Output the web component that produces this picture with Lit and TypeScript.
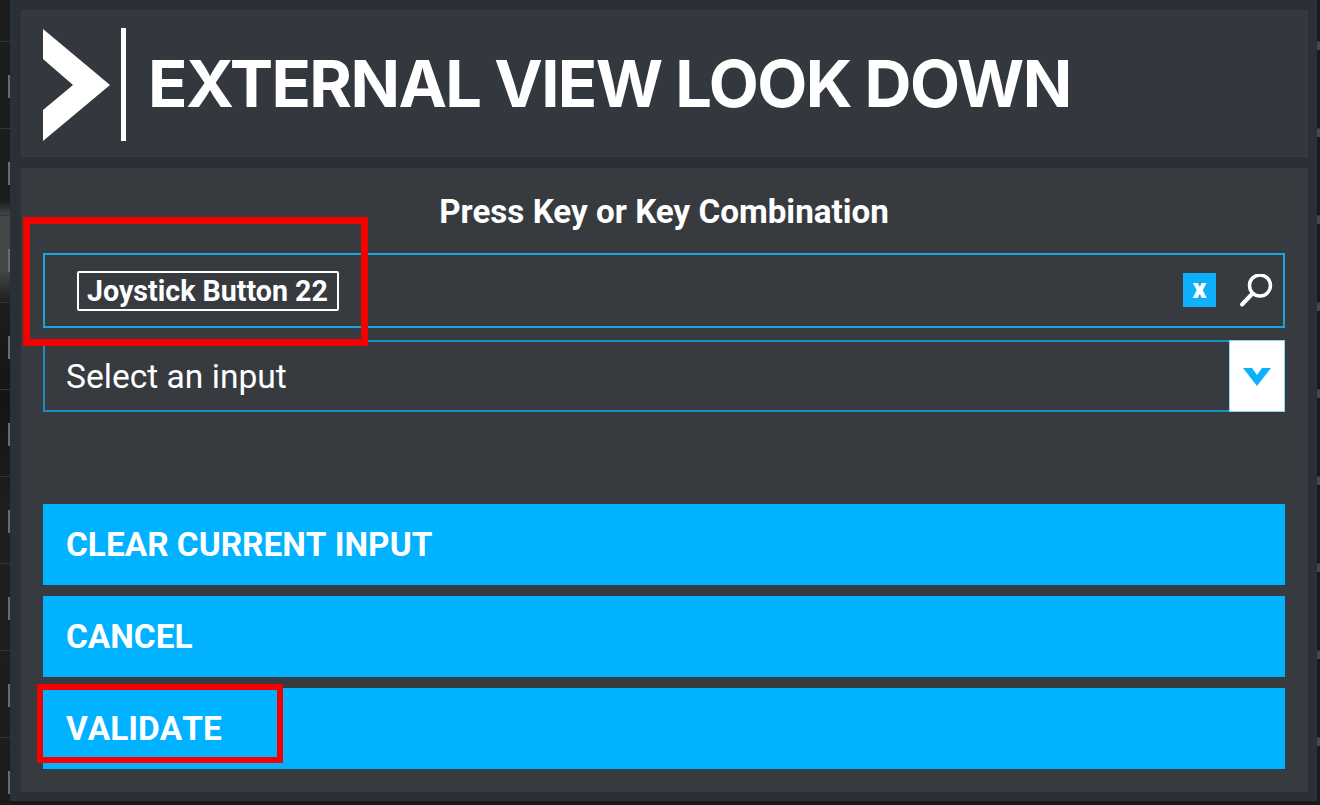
import { LitElement, html, css } from "lit";
import { customElement } from "lit/decorators.js";

// the window behind the dialog shows through on both sides as rows of 87px
const ROWS = [0, 1, 2, 3, 4, 5, 6, 7, 8];

@customElement("app-root")
export class AppRoot extends LitElement {
  static styles = css`
    :host {
      display: flex;
      position: relative;
      width: 1320px;
      height: 805px;
      overflow: hidden;
      background: #17191b;
      font-family: Roboto, "Liberation Sans", sans-serif;
      color: #fff;
    }
    .side {
      flex: none;
      display: flex;
      flex-direction: column;
      padding-top: 41px;
    }
    .side-left {
      width: 10px;
      background: linear-gradient(
        180deg,
        #1c1c1c 0,
        #1a1c1e 200px,
        #45474a 216px,
        #454746 270px,
        #1d1d1d 303px,
        #141414 400px,
        #1f1f1f 520px,
        #1b1b1b 100%
      );
    }
    .side-right {
      width: 3px;
      background: #171b20;
    }
    .row {
      box-sizing: border-box;
      height: 87px;
      flex: none;
      border-top: 1px solid #33353a;
      display: flex;
      justify-content: flex-end;
    }
    .side-left .tick {
      width: 2px;
      height: 23px;
      margin-top: 33px;
      background: #6a6c6e;
    }
    .side-right .tick {
      width: 3px;
      height: 8px;
      background: #44484c;
    }
    .frame {
      box-sizing: border-box;
      width: 1307px;
      height: 801px;
      flex: none;
      padding: 10px 9px 9px 11px;
      background: #2b3036;
      display: flex;
      flex-direction: column;
      gap: 11px;
    }
    .header {
      height: 147px;
      flex: none;
      background: #33383e;
      box-shadow: inset 0 0 0 1px #363b3f;
      display: flex;
      align-items: center;
      padding-left: 22px;
    }
    .logo {
      display: block;
      flex: none;
      margin: 1px 22px 0 0;
    }
    .title {
      font-family: Inter, Roboto, sans-serif;
      font-size: 65px;
      font-weight: 700;
      line-height: 1;
      letter-spacing: -1.6px;
      white-space: nowrap;
    }
    .body {
      flex: 1;
      background: #373b40;
      padding: 0 23px 0 22px;
      display: flex;
      flex-direction: column;
    }
    .prompt {
      height: 85px;
      flex: none;
      box-sizing: border-box;
      padding-top: 2px;
      display: flex;
      align-items: center;
      justify-content: center;
      font-size: 33.2px;
      font-weight: 700;
    }
    .field {
      box-sizing: border-box;
      height: 75px;
      flex: none;
      border: 2px solid #1ba4e0;
      display: flex;
      align-items: center;
      padding: 0 10px 0 32px;
    }
    .tag {
      box-sizing: border-box;
      height: 40px;
      padding: 0 9px 0 8px;
      border: 2px solid #fff;
      border-radius: 2px;
      font-size: 28.6px;
      font-weight: 700;
      line-height: 37px;
      white-space: nowrap;
    }
    .clear {
      width: 33px;
      height: 34px;
      margin: -2px 0 0 auto;
      background: #0fb0fb;
      font-size: 27px;
      font-weight: 900;
      line-height: 32px;
      text-align: center;
    }
    .search {
      display: block;
      margin-left: 23px;
    }
    .select {
      box-sizing: border-box;
      height: 72px;
      flex: none;
      margin-top: 12px;
      border: 2px solid #1a8dc2;
      border-right: none;
      display: flex;
      align-items: center;
      padding-left: 21px;
      font-size: 33.6px;
    }
    .arrow {
      box-sizing: border-box;
      width: 56px;
      height: 72px;
      margin-left: auto;
      border: 1px solid #8fd3f2;
      background: #fff;
      display: flex;
      align-items: center;
      justify-content: center;
      padding-top: 1px;
    }
    .actions {
      margin-top: 92px;
      display: flex;
      flex-direction: column;
      gap: 11px;
    }
    .action {
      height: 81px;
      background: #00b2ff;
      display: flex;
      align-items: center;
      padding-left: 23px;
      font-size: 33.4px;
      font-weight: 700;
      font-kerning: none;
    }
    .mark {
      position: absolute;
      box-sizing: border-box;
      border: 7px solid #f40000;
    }
    .mark-input {
      left: 23px;
      top: 217px;
      width: 345px;
      height: 129px;
    }
    .mark-validate {
      left: 37px;
      top: 684px;
      width: 246px;
      height: 79px;
      border-width: 6px;
    }
  `;

  private side(cls: string) {
    return html`
      <div class="side ${cls}">
        ${ROWS.map(() => html`<div class="row"><div class="tick"></div></div>`)}
      </div>
    `;
  }

  render() {
    return html`
      ${this.side("side-left")}
      <div class="frame">
        <div class="header">
          <svg class="logo" width="83" height="113" viewBox="0 0 83 113">
            <path d="M0 1 L67 57 L0 113 V82 L30 57 L0 31 Z" fill="#fff" />
            <rect x="78" y="0" width="5" height="113" fill="#fff" />
          </svg>
          <div class="title">EXTERNAL VIEW LOOK DOWN</div>
        </div>
        <div class="body">
          <div class="prompt">Press Key or Key Combination</div>
          <div class="field">
            <div class="tag">Joystick Button 22</div>
            <div class="clear">x</div>
            <svg class="search" width="34" height="34" viewBox="0 0 34 34">
              <circle cx="21" cy="11.5" r="10.5" fill="none" stroke="#fff" stroke-width="3.5" />
              <path d="M13 20 L3 30.5" stroke="#fff" stroke-width="4" stroke-linecap="round" />
            </svg>
          </div>
          <div class="select">
            Select an input
            <div class="arrow">
              <svg width="28" height="18" viewBox="0 0 28 18">
                <path d="M0 0 H9 L14 7 L19 0 H28 L14 18 Z" fill="#0fb0fb" />
              </svg>
            </div>
          </div>
          <div class="actions">
            <div class="action">CLEAR CURRENT INPUT</div>
            <div class="action">CANCEL</div>
            <div class="action">VALIDATE</div>
          </div>
        </div>
      </div>
      ${this.side("side-right")}
      <div class="mark mark-input"></div>
      <div class="mark mark-validate"></div>
    `;
  }
}
